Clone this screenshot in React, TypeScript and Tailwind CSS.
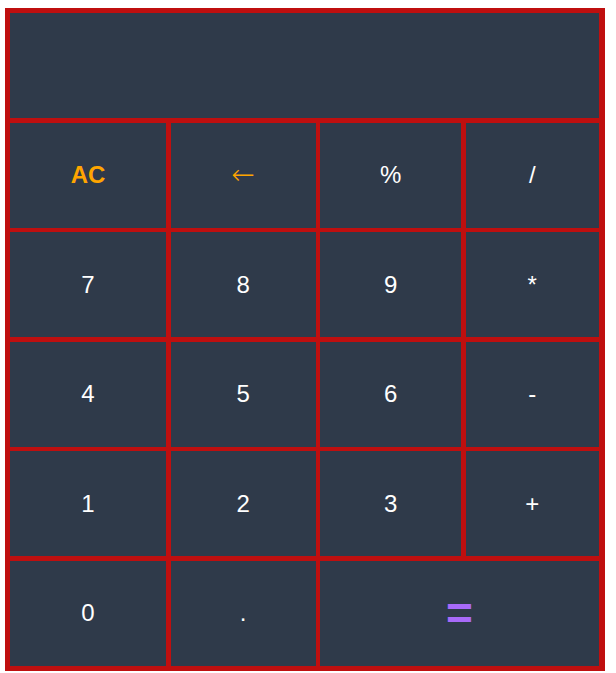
const KEYS: { label: string; tone?: "accent" | "equal"; wide?: boolean }[] = [
  { label: "AC", tone: "accent" },
  { label: "←", tone: "accent" },
  { label: "%" },
  { label: "/" },
  { label: "7" },
  { label: "8" },
  { label: "9" },
  { label: "*" },
  { label: "4" },
  { label: "5" },
  { label: "6" },
  { label: "-" },
  { label: "1" },
  { label: "2" },
  { label: "3" },
  { label: "+" },
  { label: "0" },
  { label: "." },
  { label: "=", tone: "equal", wide: true },
];

export default function App() {
  return (
    <div className="min-h-screen bg-white pt-[8px] pl-[5px]" style={{ fontFamily: '"Liberation Sans", Arial, sans-serif' }}>
      <div className="grid w-[600px] grid-cols-[156px_145px_141px_133px] grid-rows-[repeat(6,105px)] gap-[4.6px] bg-[#bf0f0f] p-[5px]">
        {/* Display */}
        <div className="col-span-4 bg-[#2f3a4a]" />

        {KEYS.map((k, i) => {
          let color = "text-white text-2xl";
          if (k.label === "AC") color = "text-[#ffa500] text-2xl font-bold";
          if (k.label === "←") color = "text-[#ffa500] text-[28px] font-['DejaVu_Sans',sans-serif] font-extralight";
          if (k.tone === "equal") color = "text-[#a86af9] text-[46px] font-bold";
          return (
            <button
              key={i}
              className={`flex items-center justify-center bg-[#2f3a4a] ${color} ${k.wide ? "col-span-2" : ""}`}
            >
              {k.label}
            </button>
          );
        })}
      </div>
    </div>
  );
}
